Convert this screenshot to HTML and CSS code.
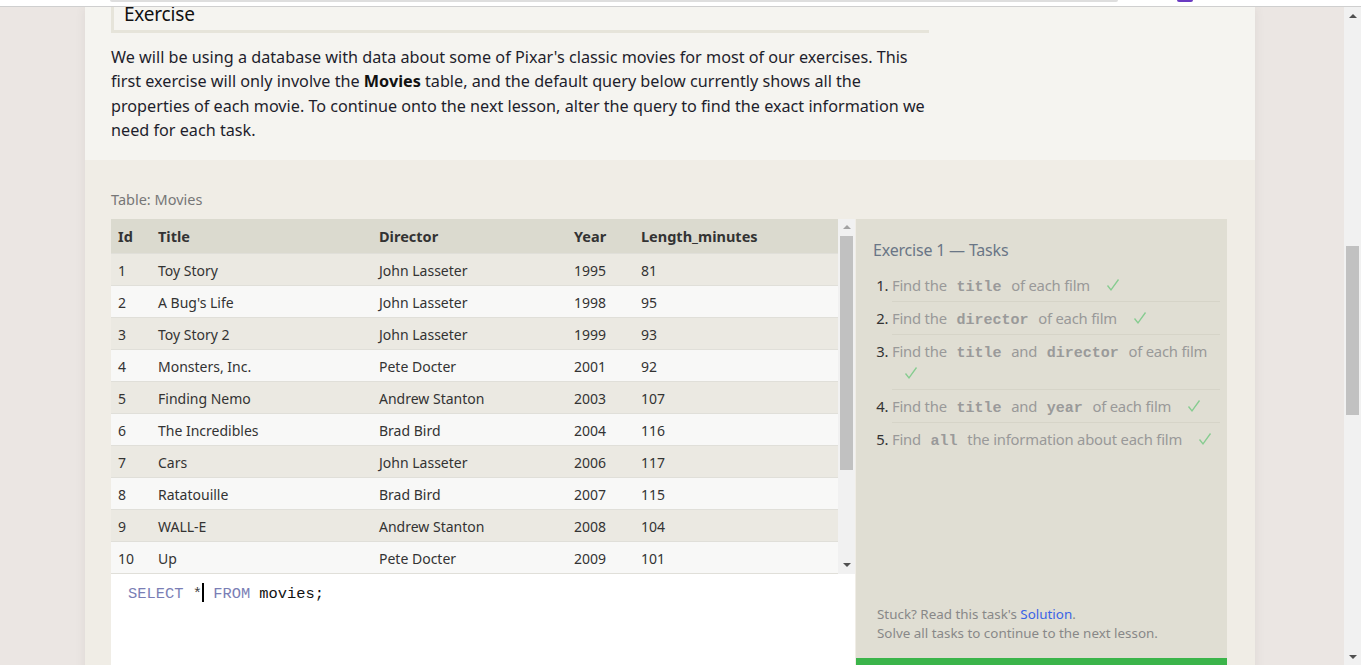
FILE: index.html
```html
<!DOCTYPE html>
<html lang="en">
<head>
<meta charset="utf-8">
<title>SQLBolt - Exercise</title>
<link rel="stylesheet" href="styles.css">
</head>
<body>
<div class="chrome">
  <div class="chrome-bar"></div>
  <div class="chrome-ext"></div>
</div>
<div class="viewport">
  <div class="page">
    <div class="column">
      <section class="intro">
        <h3 class="ex-heading">Exercise</h3>
        <p class="ex-text">We will be using a database with data about some of Pixar's classic movies for most of our exercises. This first exercise will only involve the <strong>Movies</strong> table, and the default query below currently shows all the properties of each movie. To continue onto the next lesson, alter the query to find the exact information we need for each task.</p>
      </section>
      <section class="workspace">
        <div class="table-label">Table: Movies</div>
        <div class="work-row">
          <div class="left">
            <div class="table-box">
              <div class="table-scroll">
                <table class="movies">
                  <colgroup>
                    <col class="c-id"><col class="c-title"><col class="c-dir"><col class="c-year"><col>
                  </colgroup>
                  <thead>
                    <tr><th>Id</th><th>Title</th><th>Director</th><th>Year</th><th>Length_minutes</th></tr>
                  </thead>
                  <tbody>
                    <tr><td>1</td><td>Toy Story</td><td>John Lasseter</td><td>1995</td><td>81</td></tr>
                    <tr><td>2</td><td>A Bug's Life</td><td>John Lasseter</td><td>1998</td><td>95</td></tr>
                    <tr><td>3</td><td>Toy Story 2</td><td>John Lasseter</td><td>1999</td><td>93</td></tr>
                    <tr><td>4</td><td>Monsters, Inc.</td><td>Pete Docter</td><td>2001</td><td>92</td></tr>
                    <tr><td>5</td><td>Finding Nemo</td><td>Andrew Stanton</td><td>2003</td><td>107</td></tr>
                    <tr><td>6</td><td>The Incredibles</td><td>Brad Bird</td><td>2004</td><td>116</td></tr>
                    <tr><td>7</td><td>Cars</td><td>John Lasseter</td><td>2006</td><td>117</td></tr>
                    <tr><td>8</td><td>Ratatouille</td><td>Brad Bird</td><td>2007</td><td>115</td></tr>
                    <tr><td>9</td><td>WALL-E</td><td>Andrew Stanton</td><td>2008</td><td>104</td></tr>
                    <tr><td>10</td><td>Up</td><td>Pete Docter</td><td>2009</td><td>101</td></tr>
                    <tr><td>11</td><td>Toy Story 3</td><td>Lee Unkrich</td><td>2010</td><td>103</td></tr>
                    <tr><td>12</td><td>Cars 2</td><td>John Lasseter</td><td>2011</td><td>120</td></tr>
                    <tr><td>13</td><td>Brave</td><td>Brenda Chapman</td><td>2012</td><td>102</td></tr>
                    <tr><td>14</td><td>Monsters University</td><td>Dan Scanlon</td><td>2013</td><td>110</td></tr>
                  </tbody>
                </table>
              </div>
              <div class="mini-scroll">
                <div class="arrow-up"></div>
                <div class="mini-track"><div class="mini-thumb"></div></div>
                <div class="arrow-down"></div>
              </div>
            </div>
            <div class="editor"><span class="kw">SELECT</span> <span class="op">*</span><span class="cursor"></span> <span class="kw">FROM</span> movies;</div>
          </div>
          <aside class="tasks">
            <h4 class="tasks-title">Exercise 1 — Tasks</h4>
            <ol class="task-list">
              <li>Find the <code>title</code> of each film <svg class="check" viewBox="0 0 14 14" width="14" height="14"><path d="M1.5 7.5 L5 12 L12.5 1.5"/></svg></li>
              <li>Find the <code>director</code> of each film <svg class="check" viewBox="0 0 14 14" width="14" height="14"><path d="M1.5 7.5 L5 12 L12.5 1.5"/></svg></li>
              <li>Find the <code>title</code> and <code>director</code> of each film <svg class="check" viewBox="0 0 14 14" width="14" height="14"><path d="M1.5 7.5 L5 12 L12.5 1.5"/></svg></li>
              <li>Find the <code>title</code> and <code>year</code> of each film <svg class="check" viewBox="0 0 14 14" width="14" height="14"><path d="M1.5 7.5 L5 12 L12.5 1.5"/></svg></li>
              <li>Find <code>all</code> the information about each film <svg class="check" viewBox="0 0 14 14" width="14" height="14"><path d="M1.5 7.5 L5 12 L12.5 1.5"/></svg></li>
            </ol>
            <div class="tasks-foot">
              <div>Stuck? Read this task's <a class="sol" href="#">Solution</a>.</div>
              <div>Solve all tasks to continue to the next lesson.</div>
            </div>
            <div class="green-bar"></div>
          </aside>
        </div>
      </section>
    </div>
  </div>
  <div class="page-scroll">
    <div class="arrow-up dark"></div>
    <div class="page-track"><div class="page-thumb"></div></div>
    <div class="arrow-down dark"></div>
  </div>
</div>
</body>
</html>
```
FILE: styles.css
```css
* { box-sizing: border-box; }
html, body { margin: 0; padding: 0; height: 100%; overflow: hidden; }
body {
  font-family: "Noto Sans", "Open Sans", sans-serif;
  background: #ebe6e3;
  color: #222;
}

/* top browser strip */
.chrome {
  height: 7px;
  background: #fff;
  border-bottom: 1px solid #cfcfcf;
  display: flex;
  align-items: flex-start;
  padding-left: 110px;
}
.chrome-bar {
  width: 1008px;
  height: 2px;
  background: #dedede;
  border-radius: 0 0 4px 4px;
}
.chrome-ext {
  margin-left: 59px;
  width: 16px;
  height: 2px;
  background: #6a3bc2;
  border-radius: 0 0 3px 3px;
}

.viewport {
  display: flex;
  height: 658px;
}
.page {
  flex: 1;
  padding-left: 85px;
  overflow: hidden;
}
.column {
  width: 1170px;
  min-height: 100%;
  background: #f0ede6;
  box-shadow: 0 0 10px rgba(80, 60, 50, 0.08);
}

.intro {
  background: #f5f4f0;
  padding: 0 26px 17px;
}
.ex-heading {
  margin: 0;
  width: 818px;
  height: 26px;
  border-left: 3px solid #e6e4da;
  border-bottom: 3px solid #e6e4da;
  padding-left: 10px;
  font-weight: 400;
  font-size: 19px;
  line-height: 15px;
  color: #111;
  letter-spacing: -0.2px;
}
.ex-text {
  margin: 12px 0 0;
  width: 825px;
  font-size: 16.2px;
  line-height: 24.4px;
  color: #1e1e2c;
}
.ex-text strong { color: #111; }

.workspace {
  padding: 29px 28px 0 26px;
}
.table-label {
  font-size: 14.5px;
  line-height: 20px;
  color: #777;
  margin-bottom: 10px;
}
.work-row {
  display: flex;
  gap: 1px;
}
.left {
  width: 744px;
  display: flex;
  flex-direction: column;
}
.table-box {
  display: flex;
  height: 355px;
}
.table-scroll {
  width: 727px;
  height: 355px;
  overflow: hidden;
}
.movies {
  width: 727px;
  border-collapse: collapse;
  table-layout: fixed;
  font-size: 14px;
  color: #333;
}
.c-id { width: 40px; }
.c-title { width: 221px; }
.c-dir { width: 195px; }
.c-year { width: 67px; }
.movies th {
  background: #dbdacf;
  height: 35px;
  text-align: left;
  font-weight: 700;
  font-size: 14.5px;
  padding: 0 0 0 7px;
  color: #333;
}
.movies td {
  height: 32px;
  padding: 1px 0 0 7px;
  border-top: 1px solid #e0dfd9;
}
.movies tbody tr:nth-child(odd) td { background: #ebe9e2; }
.movies tbody tr:nth-child(even) td { background: #f8f8f7; }

.mini-scroll {
  width: 17px;
  background: #f1f1f1;
  display: flex;
  flex-direction: column;
}
.arrow-up, .arrow-down {
  height: 17px;
  display: flex;
  align-items: center;
  justify-content: center;
}
.arrow-up::before {
  content: "";
  border-left: 4px solid transparent;
  border-right: 4px solid transparent;
  border-bottom: 4px solid #a3a3a3;
}
.arrow-down::before {
  content: "";
  border-left: 4px solid transparent;
  border-right: 4px solid transparent;
  border-top: 4px solid #505050;
}
.arrow-up.dark::before { border-bottom-color: #505050; }
.mini-track {
  flex: 1;
  padding: 0 2px;
}
.mini-thumb {
  height: 234px;
  background: #c1c1c1;
}

.editor {
  height: 104px;
  background: #fff;
  padding: 9px 17px;
  font-family: "Liberation Mono", "DejaVu Sans Mono", monospace;
  font-size: 15.4px;
  line-height: 20px;
  color: #111;
  white-space: pre;
}
.kw { color: #7a7eb5; }
.op { color: #444; }
.cursor {
  display: inline-block;
  width: 2px;
  height: 19px;
  background: #000;
  vertical-align: -4px;
}

.tasks {
  width: 371px;
  background: #e0ded3;
  display: flex;
  flex-direction: column;
  padding: 19px 7px 0 17px;
}
.tasks-title {
  margin: 0;
  font-weight: 400;
  font-size: 16px;
  line-height: 24px;
  color: #6a7686;
  letter-spacing: -0.2px;
}
.task-list {
  margin: 7px 0 0;
  padding-left: 19px;
  font-size: 14.8px;
  color: #999;
  letter-spacing: -0.2px;
}
.task-list li {
  padding: 5px 0;
  line-height: 22px;
  border-bottom: 1px solid #d6d4c8;
}
.task-list li:last-child { border-bottom: none; }
.task-list li::marker { color: #333; }
.task-list code {
  font-family: "Liberation Mono", "DejaVu Sans Mono", monospace;
  font-weight: 700;
  font-size: 15px;
  line-height: 1;
  color: #9a9a9a;
  padding: 0 6px;
  letter-spacing: 0;
}
.check {
  display: inline-block;
  margin-left: 12px;
  vertical-align: -1px;
  fill: none;
  stroke: #86cc90;
  stroke-width: 1.3;
}
.tasks-foot {
  margin-top: auto;
  padding: 0 0 15px 4px;
  font-size: 13.4px;
  line-height: 19px;
  color: #888;
}
.sol { color: #3b63e6; text-decoration: none; }
.green-bar {
  height: 20px;
  margin: 0 -7px 0 -17px;
  background: #3bb44a;
}

.page-scroll {
  width: 17px;
  background: #f1f1f1;
  display: flex;
  flex-direction: column;
}
.page-track {
  flex: 1;
  padding: 0 2px;
}
.page-thumb {
  margin-top: 222px;
  height: 169px;
  background: #c1c1c1;
}
```
